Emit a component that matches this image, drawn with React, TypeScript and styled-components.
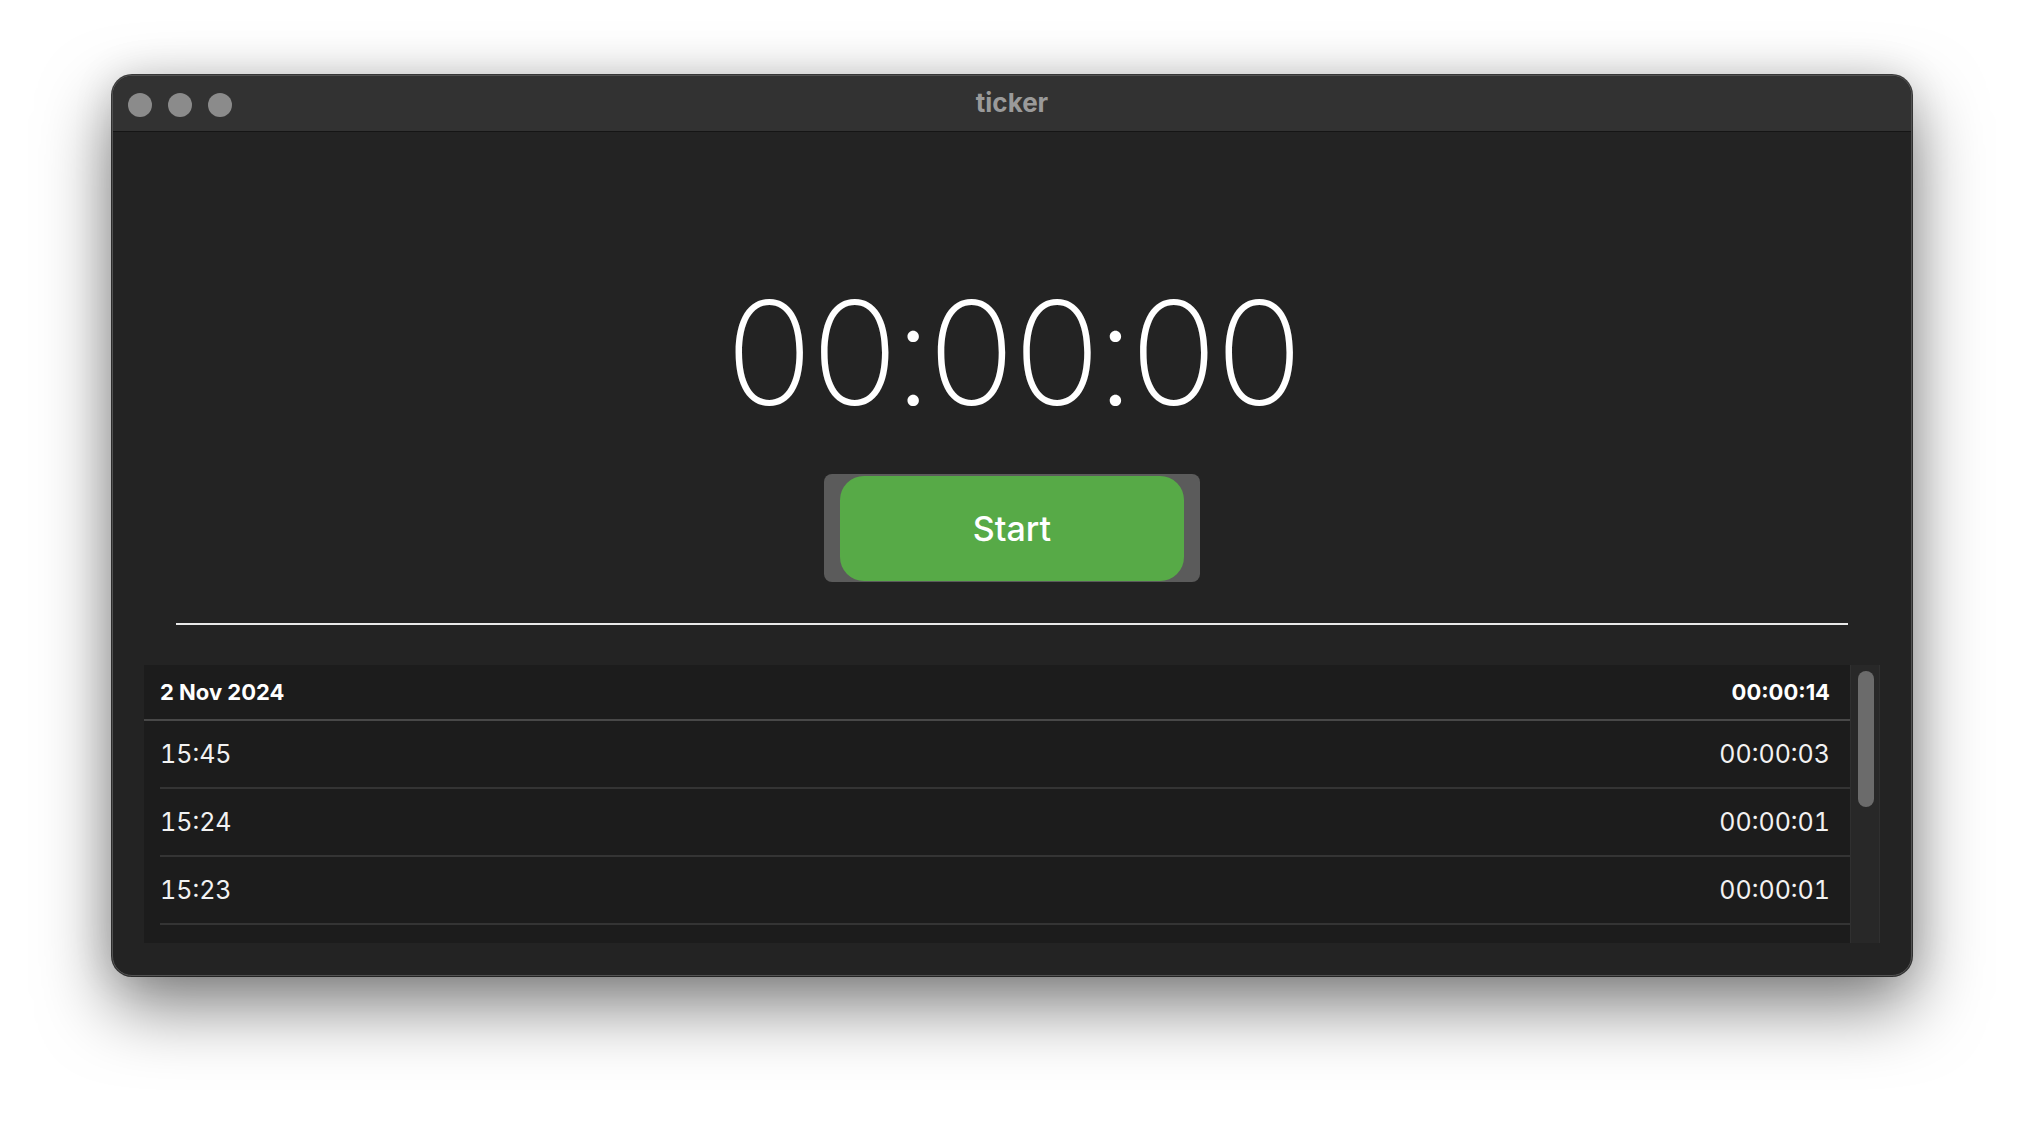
import React from "react";
import styled, { createGlobalStyle } from "styled-components";

const GlobalStyle = createGlobalStyle`
  html, body { margin: 0; padding: 0; background: #ffffff; }
  body {
    width: 2024px;
    height: 1124px;
    overflow: hidden;
    font-family: Inter, "Noto Sans", "Liberation Sans", sans-serif;
  }
`;

const Page = styled.div`
  width: 2024px;
  height: 1124px;
  box-sizing: border-box;
  padding: 75px 0 0 112px;
  background: #ffffff;
`;

const Window = styled.div`
  width: 1800px;
  height: 901px;
  box-sizing: border-box;
  border: 1px solid #525252;
  border-radius: 20px;
  overflow: hidden;
  display: flex;
  flex-direction: column;
  background: #232323;
  box-shadow: 0 0 0 1px rgba(0, 0, 0, 0.75), 0 30px 70px rgba(0, 0, 0, 0.5),
    0 0 40px rgba(0, 0, 0, 0.12);
`;

const TitleBar = styled.div`
  height: 55px;
  flex: none;
  display: grid;
  grid-template-columns: 1fr auto 1fr;
  align-items: center;
  background: #323232;
  border-bottom: 1px solid #151515;
`;

const Lights = styled.div`
  display: flex;
  gap: 16px;
  padding-left: 15px;
  padding-top: 2px;
`;

const Light = styled.span`
  width: 24px;
  height: 24px;
  border-radius: 50%;
  background: #8b8b8b;
`;

const Title = styled.div`
  font-size: 26px;
  font-weight: 700;
  color: #9a9a9a;
  padding-bottom: 2px;
`;

const Content = styled.div`
  flex: 1;
  display: flex;
  flex-direction: column;
  align-items: center;
  padding-top: 149px;
`;

const Timer = styled.div`
  font-size: 144px;
  line-height: 144px;
  font-weight: 200;
  color: #ffffff;
  font-variant-numeric: tabular-nums;
  letter-spacing: -7.5px;
  padding-right: 3px;
`;

const ButtonBezel = styled.div`
  margin-top: 49px;
  width: 376px;
  height: 108px;
  box-sizing: border-box;
  padding: 2px 16px 1px;
  border-radius: 8px;
  background: #5b5b5b;
  display: flex;
`;

const StartButton = styled.button`
  flex: 1;
  border: none;
  border-radius: 24px;
  background: #57aa47;
  color: #ffffff;
  font-family: Inter, "Noto Sans", sans-serif;
  font-size: 34px;
  font-weight: 500;
  cursor: pointer;
`;

const Divider = styled.div`
  align-self: stretch;
  margin: 41px 63px 0;
  height: 2px;
  background: #e9e9e9;
`;

const List = styled.div`
  align-self: stretch;
  margin: 40px 31px 0;
  height: 278px;
  display: flex;
  background: #1c1c1c;
`;

const Rows = styled.div`
  flex: 1;
  overflow: hidden;
`;

const HeaderRow = styled.div`
  height: 54px;
  display: flex;
  align-items: center;
  justify-content: space-between;
  padding: 0 20px 0 16px;
  border-bottom: 2px solid #484848;
  font-size: 22px;
  font-weight: 700;
  color: #ffffff;
`;

const Row = styled.div`
  height: 66px;
  margin-left: 16px;
  padding-right: 20px;
  display: flex;
  align-items: center;
  justify-content: space-between;
  border-bottom: 2px solid #343434;
  font-size: 25px;
  font-weight: 400;
  color: #f2f2f2;
  font-variant-numeric: tabular-nums;
`;

const ScrollTrack = styled.div`
  width: 30px;
  box-sizing: border-box;
  padding: 6px 5px 0 7px;
  background: #282828;
  border-left: 1px solid #303030;
  border-right: 1px solid #303030;
`;

const Thumb = styled.div`
  width: 16px;
  height: 136px;
  border-radius: 8px;
  background: #6b6b6b;
`;

const sessions = [
  { time: "15:45", duration: "00:00:03" },
  { time: "15:24", duration: "00:00:01" },
  { time: "15:23", duration: "00:00:01" },
];

export default function App() {
  return (
    <>
      <GlobalStyle />
      <Page>
        <Window>
          <TitleBar>
            <Lights>
              <Light />
              <Light />
              <Light />
            </Lights>
            <Title>ticker</Title>
            <div />
          </TitleBar>
          <Content>
            <Timer>00:00:00</Timer>
            <ButtonBezel>
              <StartButton>Start</StartButton>
            </ButtonBezel>
            <Divider />
            <List>
              <Rows>
                <HeaderRow>
                  <span>2 Nov 2024</span>
                  <span>00:00:14</span>
                </HeaderRow>
                {sessions.map((s, i) => (
                  <Row key={i}>
                    <span>{s.time}</span>
                    <span>{s.duration}</span>
                  </Row>
                ))}
              </Rows>
              <ScrollTrack>
                <Thumb />
              </ScrollTrack>
            </List>
          </Content>
        </Window>
      </Page>
    </>
  );
}
